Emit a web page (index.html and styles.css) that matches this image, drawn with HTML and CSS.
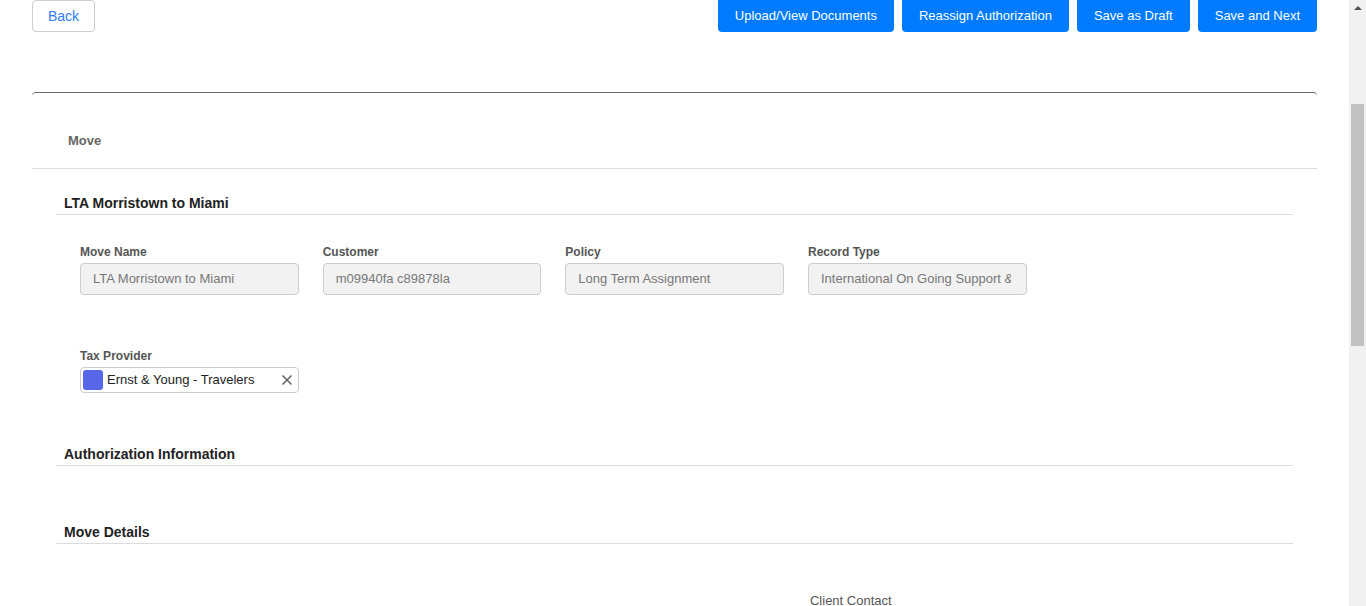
FILE: index.html
```html
<!DOCTYPE html>
<html>
<head>
<meta charset="utf-8">
<link rel="stylesheet" href="styles.css">
</head>
<body>
<div class="page">
  <div class="main">
    <div class="toolbar">
      <button class="btn btn-outline">Back</button>
      <div class="actions">
        <button class="btn btn-primary">Upload/View Documents</button>
        <button class="btn btn-primary">Reassign Authorization</button>
        <button class="btn btn-primary">Save as Draft</button>
        <button class="btn btn-primary">Save and Next</button>
      </div>
    </div>

    <div class="card">
      <div class="card-header">Move</div>
      <div class="card-body">
        <div class="section">
          <div class="section-title">LTA Morristown to Miami</div>
          <div class="fields">
            <div class="field">
              <div class="label">Move Name</div>
              <div class="input"><span class="value">LTA Morristown to Miami</span></div>
            </div>
            <div class="field">
              <div class="label">Customer</div>
              <div class="input"><span class="value">m09940fa c89878la</span></div>
            </div>
            <div class="field">
              <div class="label">Policy</div>
              <div class="input"><span class="value">Long Term Assignment</span></div>
            </div>
            <div class="field">
              <div class="label">Record Type</div>
              <div class="input"><span class="value">International On Going Support &amp; Tax Services</span></div>
            </div>
          </div>
          <div class="fields row2">
            <div class="field">
              <div class="label">Tax Provider</div>
              <div class="select">
                <span class="swatch"></span>
                <span class="select-text">Ernst &amp; Young - Travelers</span>
                <svg class="clear" width="12" height="12" viewBox="0 0 12 12"><path d="M1.5 1.5 L10.5 10.5 M10.5 1.5 L1.5 10.5" stroke="#666" stroke-width="1.6" fill="none"/></svg>
              </div>
            </div>
          </div>
        </div>

        <div class="section sec-auth">
          <div class="section-title">Authorization Information</div>
        </div>

        <div class="section sec-move">
          <div class="section-title">Move Details</div>
          <div class="fields details">
            <div class="field"></div>
            <div class="field"></div>
            <div class="field"></div>
            <div class="field">
              <div class="label light">Client Contact</div>
            </div>
          </div>
        </div>
      </div>
    </div>
  </div>
  <div class="scrollbar">
    <div class="arrow"></div>
    <div class="thumb"></div>
  </div>
</div>
</body>
</html>
```
FILE: styles.css
```css
html, body {
  margin: 0;
  padding: 0;
  height: 100%;
  overflow: hidden;
  background: #fff;
  font-family: "Liberation Sans", Arial, sans-serif;
}

.page {
  display: flex;
  height: 606px;
}

.main {
  flex: 1;
  padding: 0 32px;
  overflow: hidden;
}

.toolbar {
  display: flex;
  justify-content: space-between;
  align-items: flex-start;
  height: 32px;
}

.actions {
  display: flex;
  gap: 8px;
}

.btn {
  height: 32px;
  font-family: "Liberation Sans", Arial, sans-serif;
  font-size: 13px;
  border-radius: 4px;
  padding: 0 17px;
  cursor: pointer;
}

.btn-outline {
  background: #fff;
  border: 1px solid #cfcfcf;
  color: #2f7cf6;
  font-size: 14px;
  padding: 0 14px 1px;
  width: 63px;
}

.btn-primary {
  background: #007bff;
  border: none;
  color: #fff;
  border-radius: 0 0 4px 4px;
  padding-bottom: 2px;
}

.card {
  margin-top: 60px;
  border-top: 1px solid #6b6b6b;
  border-radius: 4px 4px 0 0;
}

.card-header {
  padding: 40px 36px 20px;
  line-height: 15px;
  font-size: 13px;
  font-weight: bold;
  color: #666;
  border-bottom: 1px solid #dcdcdc;
}

.card-body {
  padding: 0 24px;
}

.section-title {
  margin-top: 26px;
  padding: 0 8px 3px;
  font-size: 14px;
  line-height: 16px;
  font-weight: bold;
  color: #222;
  border-bottom: 1px solid #dcdcdc;
}

.fields {
  display: grid;
  grid-template-columns: repeat(4, 218.67px);
  column-gap: 24px;
  padding-left: 24px;
  margin-top: 29px;
}

.fields.row2 {
  margin-top: 53px;
}

.label {
  font-size: 12px;
  line-height: 14px;
  font-weight: bold;
  color: #555;
  padding-top: 1px;
  margin-bottom: 4px;
}

.label.light {
  font-weight: normal;
  font-size: 13px;
  line-height: 14px;
  padding-left: 2px;
}

.input {
  box-sizing: border-box;
  height: 32px;
  line-height: 30px;
  border: 1px solid #cccccc;
  border-radius: 4px;
  background: #f2f2f2;
  color: #777;
  font-size: 13px;
  padding: 0 15px 0 12px;
}

.value {
  display: block;
  white-space: nowrap;
  overflow: hidden;
}

.select {
  box-sizing: border-box;
  height: 26px;
  border: 1px solid #cccccc;
  border-radius: 4px;
  background: #fff;
  display: flex;
  align-items: center;
  padding: 0 5px 0 2px;
}

.swatch {
  width: 20px;
  height: 20px;
  border-radius: 3px;
  background: #5866e9;
  flex: none;
}

.select-text {
  margin-left: 4px;
  margin-bottom: 2px;
  font-size: 13px;
  color: #222;
  flex: 1;
  white-space: nowrap;
}

.clear {
  flex: none;
}

.sec-auth .section-title {
  margin-top: 53px;
}

.sec-move .section-title {
  margin-top: 58px;
}

.fields.details {
  margin-top: 49px;
}

.scrollbar {
  width: 17px;
  flex: none;
  background: #f1f1f1;
  display: flex;
  flex-direction: column;
  align-items: center;
}

.arrow {
  margin-top: 6px;
  width: 0;
  height: 0;
  border-left: 4px solid transparent;
  border-right: 4px solid transparent;
  border-bottom: 4px solid #505050;
}

.thumb {
  margin-top: 94px;
  width: 13px;
  height: 242px;
  background: #c1c1c1;
}
```
